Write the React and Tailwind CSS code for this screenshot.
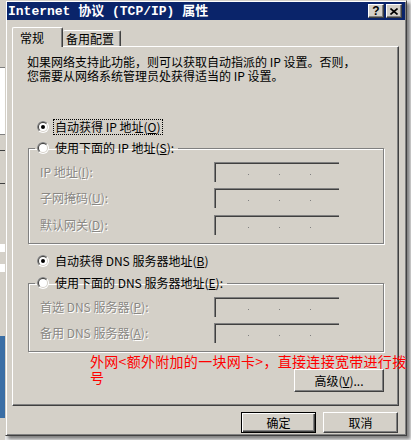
import React from "react"

// classic win2k radio button
const Radio = ({ checked }) => (
  <svg width="12" height="12" viewBox="0 0 12 12" className="shrink-0">
    <circle cx="6" cy="6" r="6" fill="#ffffff" />
    <path d="M1.757 10.243 A6 6 0 0 1 10.243 1.757 Z" fill="#808080" />
    <circle cx="6" cy="6" r="5" fill="#d4d0c8" />
    <path d="M2.464 9.536 A5 5 0 0 1 9.536 2.464 Z" fill="#404040" />
    <circle cx="6" cy="6" r="4" fill="#ffffff" />
    {checked && <circle cx="6" cy="6" r="2" fill="#000000" />}
  </svg>
)

const Acc = ({ children }) => <span className="underline underline-offset-1">{children}</span>

const RadioRow = ({ checked, focused, children }) => (
  <div className="flex items-center h-[16px] gap-[4px]">
    <Radio checked={checked} />
    <span
      className={
        "px-[1px] leading-[14px] whitespace-nowrap border " +
        (focused ? "border-dotted border-black" : "border-transparent")
      }
    >
      {children}
    </span>
  </div>
)

const IpBox = () => (
  <div className="w-[125px] h-[20px] border-t border-l border-[#808080] border-r-white border-b-white shadow-[inset_1px_1px_0_#404040] flex items-start pt-[11px] pl-[33px] gap-[30px]">
    <div className="w-px h-px bg-[#808080]" />
    <div className="w-px h-px bg-[#808080]" />
    <div className="w-px h-px bg-[#808080]" />
  </div>
)

const FieldRow = ({ label, className }) => (
  <div className={"flex items-center " + className}>
    <div className="w-[174px] text-[#8a8884] [text-shadow:1px_1px_0_#ffffff] leading-[14px] whitespace-nowrap">
      {label}
    </div>
    <IpBox />
  </div>
)

const Group = ({ legend, children }) => (
  <fieldset className="ml-[15px] mr-[14px] border border-[#808080] shadow-[inset_1px_1px_0_#ffffff,1px_1px_0_#ffffff] pl-[11px] pt-[6px] pb-[8px]">
    <legend className="ml-[-5px] px-[2px]">{legend}</legend>
    {children}
  </fieldset>
)

const Button = ({ children, isDefault, className }) => (
  <button
    className={
      "h-[21px] flex items-center justify-center leading-[14px] bg-[#d4d0c8] " +
      (isDefault
        ? "border border-black shadow-[inset_1px_1px_0_#ffffff,inset_-1px_-1px_0_#404040,inset_-2px_-2px_0_#808080] "
        : "border border-t-white border-l-white border-r-[#404040] border-b-[#404040] shadow-[inset_-1px_-1px_0_#808080] ") +
      className
    }
  >
    {children}
  </button>
)

const TitleButton = ({ children }) => (
  <div className="w-[16px] h-[14px] bg-[#d4d0c8] border border-t-white border-l-white border-r-[#404040] border-b-[#404040] shadow-[inset_-1px_-1px_0_#808080] flex items-center justify-center">
    {children}
  </div>
)

export default function App() {
  return (
    <div className="w-[411px] h-[440px] bg-[#ececec] flex font-['Noto_Sans_CJK_SC',sans-serif] text-[12px] text-black overflow-hidden">
      {/* window behind, left edge */}
      <div className="w-[5px] flex flex-col shrink-0">
        <div className="h-[67px] bg-[#d4d0c8]" />
        <div className="h-[68px] bg-white border-y border-[#808080]" />
        <div className="h-[15px] bg-[#d4d0c8]" />
        <div className="h-px bg-[#404040]" />
        <div className="h-[32px] bg-[#d4d0c8]" />
        <div className="h-px bg-[#404040]" />
        <div className="h-[60px] bg-[#d4d0c8]" />
        <div className="h-[8px] bg-white" />
        <div className="h-[12px] bg-[#d4d0c8]" />
        <div className="h-[8px] bg-white" />
        <div className="h-[64px] bg-[#d4d0c8]" />
        <div className="h-[82px] bg-[#3a6ea5]" />
        <div className="flex-1 bg-[#d4d0c8]" />
      </div>

      {/* dialog */}
      <div className="w-[402px] h-[436px] shrink-0 bg-[#d4d0c8] border border-t-[#d4d0c8] border-l-[#d4d0c8] border-r-[#404040] border-b-[#404040] shadow-[inset_1px_1px_0_#ffffff,inset_-1px_-1px_0_#808080,3px_3px_3px_rgba(0,0,0,0.45)] p-px flex flex-col">
        {/* title bar */}
        <div className="h-[18px] bg-[#0a246a] flex items-center justify-between pl-[1px] pr-[3px]">
          <span className="text-white font-bold text-[13px] leading-[15px] font-['Liberation_Mono','Noto_Sans_CJK_SC',monospace] whitespace-pre">
            Internet 协议 (TCP/IP) 属性
          </span>
          <div className="flex gap-[2px]">
            <TitleButton>
              <span className="font-bold text-[12px] leading-none font-['Liberation_Sans',sans-serif]">?</span>
            </TitleButton>
            <TitleButton>
              <svg width="8" height="7" viewBox="0 0 8 7">
                <path d="M0.5 0.5 L7.5 6.5 M7.5 0.5 L0.5 6.5" stroke="#000" strokeWidth="1.6" />
              </svg>
            </TitleButton>
          </div>
        </div>

        <div className="pl-[5px] pr-[6px] pt-[7px] flex flex-col">
          {/* tabs */}
          <div className="flex items-end h-[19px]">
            <div className="relative z-10 w-[51px] h-[20px] -mb-px bg-[#d4d0c8] border-t border-l border-white border-r border-r-[#404040] rounded-t-[2px] shadow-[inset_-1px_0_0_#808080] flex items-center pl-[7px] leading-[14px]">
              常规
            </div>
            <div className="w-[58px] h-[16px] bg-[#d4d0c8] border-t border-white border-r border-r-[#404040] rounded-t-[2px] shadow-[inset_-1px_0_0_#808080] flex items-center pl-[3px] leading-[14px]">
              备用配置
            </div>
          </div>

          {/* panel */}
          <div className="h-[360px] border border-t-white border-l-white border-r-[#404040] border-b-[#404040] shadow-[inset_-1px_-1px_0_#808080] flex flex-col">
            <p className="mt-[8px] pl-[14px] leading-[14px] whitespace-nowrap">
              如果网络支持此功能，则可以获取自动指派的 IP 设置。否则，
              <br />
              您需要从网络系统管理员处获得适当的 IP 设置。
            </p>

            <div className="mt-[36px] ml-[24px]">
              <RadioRow checked focused>
                自动获得 IP 地址(<Acc>O</Acc>)
              </RadioRow>
            </div>

            <div className="mt-[5px]">
              <Group
                legend={
                  <RadioRow>
                    使用下面的 IP 地址(<Acc>S</Acc>):
                  </RadioRow>
                }
              >
                <FieldRow label={<>IP 地址(<Acc>I</Acc>):</>} className="" />
                <FieldRow label={<>子网掩码(<Acc>U</Acc>):</>} className="mt-[6px]" />
                <FieldRow label={<>默认网关(<Acc>D</Acc>):</>} className="mt-[7px]" />
              </Group>
            </div>

            <div className="mt-[9px] ml-[24px]">
              <RadioRow checked>
                自动获得 DNS 服务器地址(<Acc>B</Acc>)
              </RadioRow>
            </div>

            <div className="mt-[6px]">
              <Group
                legend={
                  <RadioRow>
                    使用下面的 DNS 服务器地址(<Acc>E</Acc>):
                  </RadioRow>
                }
              >
                <FieldRow label={<>首选 DNS 服务器(<Acc>P</Acc>):</>} className="" />
                <FieldRow label={<>备用 DNS 服务器(<Acc>A</Acc>):</>} className="mt-[6px]" />
              </Group>
            </div>

            {/* red annotation, wraps after 拨 */}
            <p className="mt-[1px] ml-[77px] text-[14px] leading-[16px] tracking-[0.3px] text-[#ff0000] whitespace-nowrap">
              外网&lt;额外附加的一块网卡&gt;，直接连接宽带进行拨
            </p>
            <div className="flex items-start justify-between ml-[77px] mr-[14px]">
              <span className="text-[14px] leading-[16px] text-[#ff0000]">号</span>
              <Button className="w-[90px] h-[23px]">
                高级(<Acc>V</Acc>)...
              </Button>
            </div>
          </div>

          {/* bottom buttons */}
          <div className="mt-[6px] flex justify-end gap-[7px] pr-px">
            <Button isDefault className="w-[75px]">
              确定
            </Button>
            <Button className="w-[75px]">取消</Button>
          </div>
        </div>
      </div>
    </div>
  )
}
